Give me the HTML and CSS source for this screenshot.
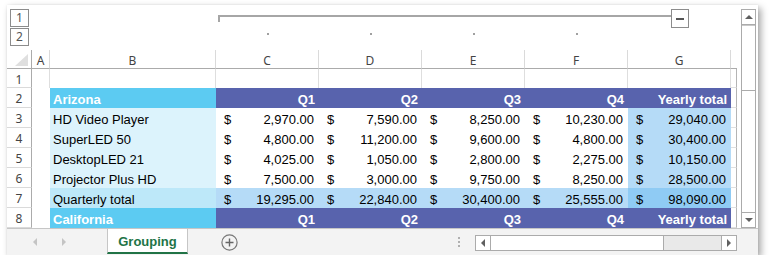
FILE: index.html
```html
<!DOCTYPE html>
<html lang="en">
<head>
    <meta charset="UTF-8">
    <title>Grouping</title>
    <link rel="stylesheet" href="styles.css">
</head>
<body>

    <div class="window">
        <div class="main">
            <div class="sheet">
                <!-- outline (column grouping) -->
                <div class="outline">
                    <div class="levels">
                        <div class="level">1</div>
                        <div class="level">2</div>
                    </div>
                    <div class="group-bar">
                        <div class="bracket"></div>
                        <div class="collapse"><span></span></div>
                    </div>
                    <div class="dot dot-c"></div>
                    <div class="dot dot-d"></div>
                    <div class="dot dot-e"></div>
                    <div class="dot dot-f"></div>
                </div>

                <div class="grid">
                    <!-- column headers -->
                    <div class="corner"><span></span></div>
                    <div class="ch">A</div>
                    <div class="ch">B</div>
                    <div class="ch">C</div>
                    <div class="ch">D</div>
                    <div class="ch">E</div>
                    <div class="ch">F</div>
                    <div class="ch">G</div>
                    <div class="ch ch-h"></div>

                    <!-- row 1 -->
                    <div class="rh">1</div>
                    <div class="cell blank"></div>
                    <div class="cell blank"></div>
                    <div class="cell blank"></div>
                    <div class="cell blank"></div>
                    <div class="cell blank"></div>
                    <div class="cell blank"></div>
                    <div class="cell blank"></div>
                    <div class="cell hx"></div>

                    <!-- row 2 -->
                    <div class="rh">2</div>
                    <div class="cell ca"></div>
                    <div class="cell region">Arizona</div>
                    <div class="cell qh">Q1</div>
                    <div class="cell qh">Q2</div>
                    <div class="cell qh">Q3</div>
                    <div class="cell qh">Q4</div>
                    <div class="cell qh">Yearly total</div>
                    <div class="cell hx"></div>

                    <!-- row 3 -->
                    <div class="rh">3</div>
                    <div class="cell ca"></div>
                    <div class="cell item">HD Video Player</div>
                    <div class="cell num"><span>$</span><span>2,970.00</span></div>
                    <div class="cell num"><span>$</span><span>7,590.00</span></div>
                    <div class="cell num"><span>$</span><span>8,250.00</span></div>
                    <div class="cell num"><span>$</span><span>10,230.00</span></div>
                    <div class="cell num tot"><span>$</span><span>29,040.00</span></div>
                    <div class="cell hx"></div>

                    <!-- row 4 -->
                    <div class="rh">4</div>
                    <div class="cell ca"></div>
                    <div class="cell item">SuperLED 50</div>
                    <div class="cell num"><span>$</span><span>4,800.00</span></div>
                    <div class="cell num"><span>$</span><span>11,200.00</span></div>
                    <div class="cell num"><span>$</span><span>9,600.00</span></div>
                    <div class="cell num"><span>$</span><span>4,800.00</span></div>
                    <div class="cell num tot"><span>$</span><span>30,400.00</span></div>
                    <div class="cell hx"></div>

                    <!-- row 5 -->
                    <div class="rh">5</div>
                    <div class="cell ca"></div>
                    <div class="cell item">DesktopLED 21</div>
                    <div class="cell num"><span>$</span><span>4,025.00</span></div>
                    <div class="cell num"><span>$</span><span>1,050.00</span></div>
                    <div class="cell num"><span>$</span><span>2,800.00</span></div>
                    <div class="cell num"><span>$</span><span>2,275.00</span></div>
                    <div class="cell num tot"><span>$</span><span>10,150.00</span></div>
                    <div class="cell hx"></div>

                    <!-- row 6 -->
                    <div class="rh">6</div>
                    <div class="cell ca"></div>
                    <div class="cell item">Projector Plus HD</div>
                    <div class="cell num"><span>$</span><span>7,500.00</span></div>
                    <div class="cell num"><span>$</span><span>3,000.00</span></div>
                    <div class="cell num"><span>$</span><span>9,750.00</span></div>
                    <div class="cell num"><span>$</span><span>8,250.00</span></div>
                    <div class="cell num tot"><span>$</span><span>28,500.00</span></div>
                    <div class="cell hx"></div>

                    <!-- row 7 -->
                    <div class="rh">7</div>
                    <div class="cell ca"></div>
                    <div class="cell item sum">Quarterly total</div>
                    <div class="cell num sum"><span>$</span><span>19,295.00</span></div>
                    <div class="cell num sum"><span>$</span><span>22,840.00</span></div>
                    <div class="cell num sum"><span>$</span><span>30,400.00</span></div>
                    <div class="cell num sum"><span>$</span><span>25,555.00</span></div>
                    <div class="cell num sum-tot"><span>$</span><span>98,090.00</span></div>
                    <div class="cell hx"></div>

                    <!-- row 8 -->
                    <div class="rh">8</div>
                    <div class="cell ca"></div>
                    <div class="cell region">California</div>
                    <div class="cell qh">Q1</div>
                    <div class="cell qh">Q2</div>
                    <div class="cell qh">Q3</div>
                    <div class="cell qh">Q4</div>
                    <div class="cell qh">Yearly total</div>
                    <div class="cell hx"></div>
                </div>
            </div>

            <div class="vscroll">
                <div class="sb-btn"><span class="arrow up"></span></div>
                <div class="vthumb"></div>
                <div class="vtrack"></div>
                <div class="sb-btn sb-down"><span class="arrow down"></span></div>
            </div>
        </div>

        <div class="tabbar">
            <div class="nav">
                <span class="arrow left light"></span>
                <span class="arrow right light"></span>
            </div>
            <div class="tab">Grouping</div>
            <div class="add">
                <svg width="17" height="17" viewBox="0 0 17 17">
                    <circle cx="8.5" cy="8.5" r="7.6" fill="none" stroke="#777" stroke-width="1.2"/>
                    <path d="M8.5 4.5v8M4.5 8.5h8" stroke="#666" stroke-width="1.4"/>
                </svg>
            </div>
            <div class="sep"><i></i><i></i><i></i></div>
            <div class="hscroll">
                <div class="hb"><span class="arrow left"></span></div>
                <div class="hthumb"></div>
                <div class="htrack"></div>
                <div class="hb hb-right"><span class="arrow right"></span></div>
            </div>
        </div>
    </div>

</body>
</html>
```

FILE: styles.css
```css
body {
    margin: 0;
    background: #fff;
    font-family: 'Liberation Sans', Arial, sans-serif;
}

.window {
    margin: 5px 0 0 7px;
    width: 751px;
    height: 250px;
    background: #fff;
    box-shadow: 3px 3px 7px rgba(0, 0, 0, 0.35), 0 0 2px rgba(0, 0, 0, 0.08);
    display: flex;
    flex-direction: column;
}

.main {
    display: flex;
    height: 223px;
}

.sheet {
    width: 730px;
}

/* outline area */
.outline {
    display: grid;
    grid-template-columns: 25px 18px 166px repeat(5, 103px) 6px;
    grid-template-rows: 23px 22px;
}

.levels {
    grid-column: 1;
    grid-row: 1 / 3;
    padding: 4px 0 0 3px;
}

.level {
    box-sizing: border-box;
    width: 19px;
    height: 18px;
    margin-bottom: 1px;
    border: 1px solid #8c8c8c;
    font-family: 'Noto Sans', sans-serif;
    font-size: 12px;
    line-height: 16px;
    text-align: center;
    color: #555;
}

.group-bar {
    grid-column: 4 / 9;
    grid-row: 1;
    display: flex;
    align-items: flex-start;
}

.bracket {
    flex: 1;
    margin: 10px 0 0 2px;
    height: 5px;
    border-top: 2px solid #a6a6a6;
    border-left: 2px solid #a6a6a6;
}

.collapse {
    box-sizing: border-box;
    width: 18px;
    height: 19px;
    margin: 4px 42px 0 0;
    border: 1px solid #8c8c8c;
    display: flex;
    align-items: center;
    justify-content: center;
}

.collapse span {
    width: 8px;
    height: 2px;
    background: #555;
}

.dot {
    grid-row: 2;
    justify-self: center;
    width: 2px;
    height: 2px;
    margin-top: 5px;
    background: #a0a0a0;
}

.dot-c { grid-column: 4; }
.dot-d { grid-column: 5; }
.dot-e { grid-column: 6; }
.dot-f { grid-column: 7; }

/* sheet grid */
.grid {
    display: grid;
    grid-template-columns: 25px 18px 166px repeat(5, 103px) 6px;
    grid-template-rows: 19px 19px repeat(7, 20px);
}

.grid > div {
    box-sizing: border-box;
}

.corner {
    border-right: 1px solid #ababab;
    border-bottom: 1px solid #ababab;
    display: flex;
    align-items: flex-end;
    justify-content: flex-end;
    padding: 0 3px 2px 0;
}

.corner span {
    width: 0;
    height: 0;
    border-left: 13px solid transparent;
    border-bottom: 12px solid #dfdfdf;
}

.ch {
    border-right: 1px solid #dadada;
    border-bottom: 1px solid #ababab;
    font-family: 'Noto Sans', sans-serif;
    font-size: 12px;
    color: #444;
    text-align: center;
    line-height: 19px;
    padding-top: 1px;
}

.ch-h {
    border-right: none;
}

.rh {
    border-right: 1px solid #ababab;
    border-bottom: 1px solid #dadada;
    font-family: 'Noto Sans', sans-serif;
    font-size: 12px;
    color: #444;
    text-align: center;
    line-height: 19px;
    padding-top: 1px;
}

.cell {
    font-size: 13px;
    line-height: 19px;
    padding-top: 2px;
    color: #000;
    white-space: nowrap;
    overflow: hidden;
}

.blank {
    border-right: 1px solid #dedede;
}

.hx {
    border-right: 1px solid #b4b4b4;
    border-bottom: 1px solid #e0e0e0;
}

.region {
    background: #5ccbf2;
    color: #fff;
    font-weight: bold;
    padding-left: 3px;
}

.qh {
    background: #5863ad;
    color: #fff;
    font-weight: bold;
    text-align: right;
    padding-right: 4px;
}

.item {
    background: #dcf3fc;
    padding-left: 3px;
}

.item.sum {
    background: #bde8f9;
}

.num {
    display: flex;
    justify-content: space-between;
    padding-left: 8px;
    padding-right: 5px;
}

.tot,
.num.sum {
    background: #b5dbf7;
}

.sum-tot {
    background: #8fcbf4;
}

/* vertical scrollbar */
.vscroll {
    box-sizing: border-box;
    width: 15px;
    height: 219px;
    margin: 4px 0 0 4px;
    border: 1px solid #ababab;
    display: flex;
    flex-direction: column;
}

.sb-btn {
    height: 14px;
    border-bottom: 1px solid #ababab;
    display: flex;
    align-items: center;
    justify-content: center;
}

.sb-down {
    border-bottom: none;
    border-top: 1px solid #ababab;
}

.vthumb {
    height: 64px;
    border-bottom: 1px solid #ababab;
    border-top: 1px solid #c8c8c8;
}

.vtrack {
    flex: 1;
}

.arrow {
    width: 0;
    height: 0;
}

.arrow.up {
    border-left: 4px solid transparent;
    border-right: 4px solid transparent;
    border-bottom: 4px solid #606060;
}

.arrow.down {
    border-left: 4px solid transparent;
    border-right: 4px solid transparent;
    border-top: 4px solid #606060;
}

.arrow.left {
    border-top: 4px solid transparent;
    border-bottom: 4px solid transparent;
    border-right: 4px solid #606060;
}

.arrow.right {
    border-top: 4px solid transparent;
    border-bottom: 4px solid transparent;
    border-left: 4px solid #606060;
}

.arrow.light.left {
    border-right-color: #c4c4c4;
}

.arrow.light.right {
    border-left-color: #c4c4c4;
}

/* sheet tabs */
.tabbar {
    flex: 1;
    background: #f3f3f3;
    border-top: 1px solid #c6c6c6;
    display: flex;
    align-items: center;
}

.nav {
    width: 100px;
    display: flex;
    align-items: center;
    padding-left: 26px;
    box-sizing: border-box;
}

.nav .right {
    margin-left: 25px;
}

.tab {
    align-self: flex-start;
    box-sizing: border-box;
    width: 81px;
    height: 25px;
    background: #fff;
    border-left: 1px solid #c6c6c6;
    border-right: 1px solid #c6c6c6;
    border-bottom: 2px solid #217346;
    color: #217346;
    font-weight: bold;
    font-size: 13px;
    line-height: 25px;
    text-align: center;
}

.add {
    margin-left: 33px;
    height: 17px;
    margin-top: 1px;
}

.add svg {
    display: block;
}

.sep {
    margin-left: 220px;
    display: flex;
    flex-direction: column;
    gap: 2px;
}

.sep i {
    width: 2px;
    height: 2px;
    background: #b0b0b0;
}

.hscroll {
    box-sizing: border-box;
    margin-left: 15px;
    width: 262px;
    height: 16px;
    border: 1px solid #ababab;
    background: #fff;
    display: flex;
    margin-top: 2px;
}

.hb {
    width: 14px;
    border-right: 1px solid #ababab;
    display: flex;
    align-items: center;
    justify-content: center;
}

.hb-right {
    border-right: none;
    border-left: 1px solid #ababab;
}

.hthumb {
    width: 172px;
    border-right: 1px solid #ababab;
}

.htrack {
    flex: 1;
    background: #e9e9e9;
}
```
